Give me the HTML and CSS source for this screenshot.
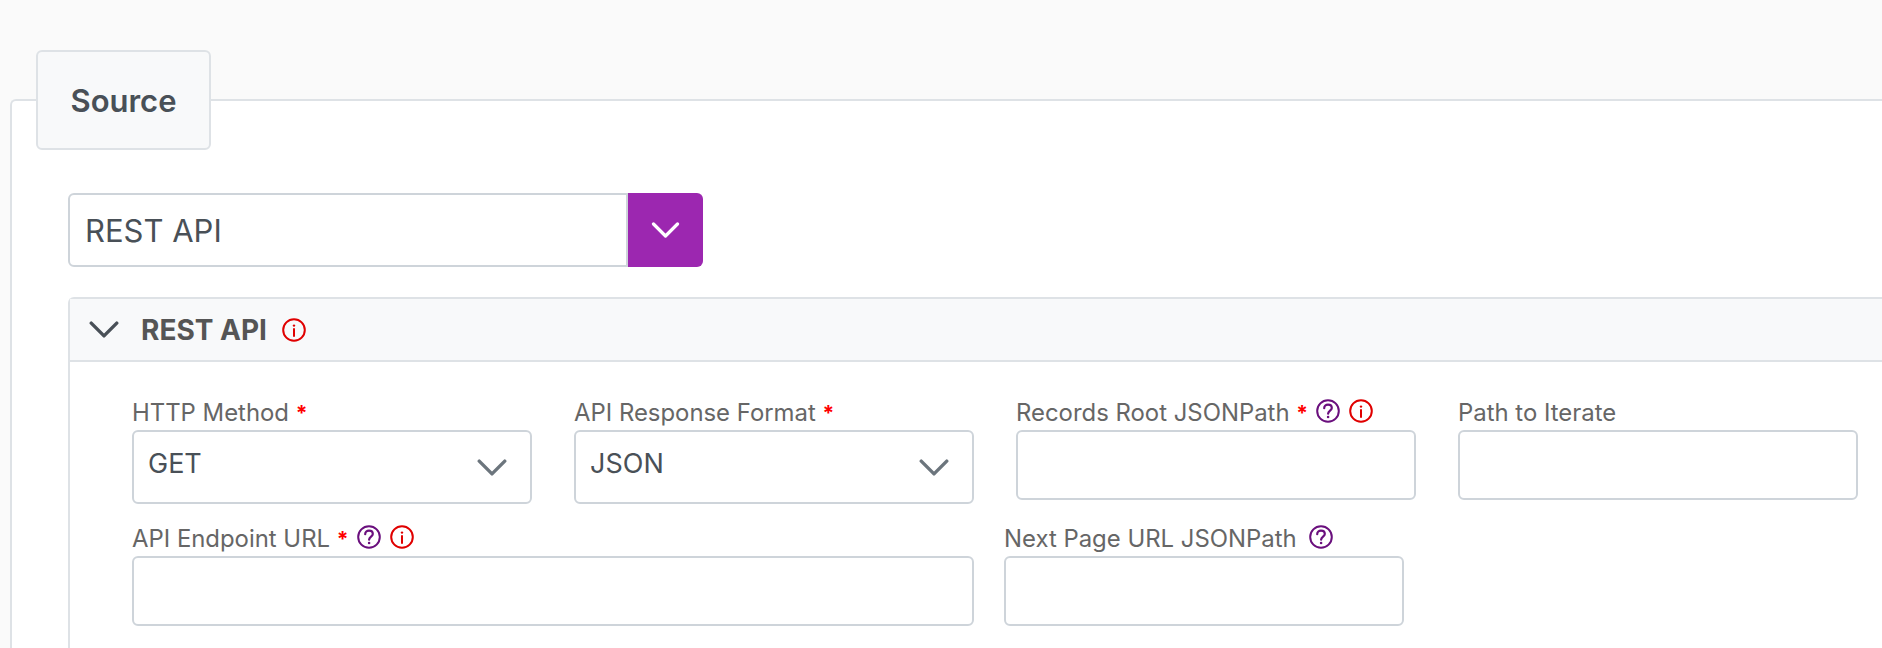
FILE: index.html
```html
<!DOCTYPE html>
<html lang="en">
<head>
  <meta charset="UTF-8" />
  <title>Source</title>
  <link rel="stylesheet" href="styles.css">
</head>
<body>
  <svg class="sprite" width="0" height="0">
    <symbol id="icon-info" viewBox="0 0 24 24">
      <circle cx="12" cy="12" r="10.8" fill="none" stroke="currentColor" stroke-width="2" />
      <circle cx="12" cy="7.6" r="1.2" fill="currentColor" />
      <path d="M12 11v7" fill="none" stroke="currentColor" stroke-width="2" stroke-linecap="round" />
    </symbol>
    <symbol id="icon-help" viewBox="0 0 24 24">
      <circle cx="12" cy="12" r="10.8" fill="none" stroke="currentColor" stroke-width="2" />
      <path d="M8.2 9.2c0-2.3 1.7-3.6 3.8-3.6s3.8 1.3 3.8 3.3c0 2.6-3.7 2.8-3.7 5.8" fill="none" stroke="currentColor" stroke-width="2.2" stroke-linecap="round" />
      <circle cx="12.1" cy="18" r="1.3" fill="currentColor" />
    </symbol>
    <symbol id="icon-chevron" viewBox="0 0 28 16">
      <path d="M2 2L14 14L26 2" fill="none" stroke="currentColor" stroke-width="3.2" stroke-linecap="round" stroke-linejoin="round" />
    </symbol>
  </svg>

  <section class="panel">
    <h2 class="panel-tab">Source</h2>

    <div class="source-picker">
      <select class="source-select">
        <option>REST API</option>
      </select>
      <button type="button" class="source-toggle">
        <svg class="icon-chevron-sm"><use href="#icon-chevron" /></svg>
      </button>
    </div>

    <div class="accordion">
      <div class="accordion-header">
        <svg class="accordion-chevron"><use href="#icon-chevron" /></svg>
        <span class="accordion-title">REST API</span>
        <svg class="icon icon-red"><use href="#icon-info" /></svg>
      </div>

      <form class="accordion-body">
        <div class="form-row row-four">
          <div class="field">
            <label>HTTP Method <span class="req">*</span></label>
            <div class="select-wrap">
              <select><option>GET</option></select>
              <svg class="select-chevron"><use href="#icon-chevron" /></svg>
            </div>
          </div>
          <div class="field">
            <label>API Response Format <span class="req">*</span></label>
            <div class="select-wrap">
              <select><option>JSON</option></select>
              <svg class="select-chevron"><use href="#icon-chevron" /></svg>
            </div>
          </div>
          <div class="field">
            <label>Records Root JSONPath <span class="req">*</span>
              <svg class="icon icon-purple"><use href="#icon-help" /></svg>
              <svg class="icon icon-red"><use href="#icon-info" /></svg>
            </label>
            <input type="text" />
          </div>
          <div class="field">
            <label>Path to Iterate</label>
            <input type="text" />
          </div>
        </div>

        <div class="form-row row-two">
          <div class="field field-wide">
            <label>API Endpoint URL <span class="req">*</span>
              <svg class="icon icon-purple"><use href="#icon-help" /></svg>
              <svg class="icon icon-red"><use href="#icon-info" /></svg>
            </label>
            <input type="text" />
          </div>
          <div class="field">
            <label>Next Page URL JSONPath
              <svg class="icon icon-purple icon-gap"><use href="#icon-help" /></svg>
            </label>
            <input type="text" />
          </div>
        </div>
      </form>
    </div>
  </section>
</body>
</html>
```

FILE: styles.css
```css
html, body {
  height: 648px;
  overflow: hidden;
}

body {
  margin: 0;
  padding-top: 99px;
  box-sizing: border-box;
  background: #fafafa;
  font-family: Inter, "Noto Sans", sans-serif;
  color: #495057;
}

.sprite {
  display: block;
  height: 0;
}

.panel {
  margin-left: 10px;
  height: 549px;
  padding-left: 26px;
  background: #fff;
  border: 2px solid #dee2e6;
  border-right: 0;
  border-bottom: 0;
  border-radius: 6px 0 0 0;
  box-sizing: border-box;
}

.panel-tab {
  width: 175px;
  height: 100px;
  margin: -51px 0 0 -2px;
  padding-top: 1px;
  box-sizing: border-box;
  display: flex;
  align-items: center;
  justify-content: center;
  background: #f8f9fa;
  border: 2px solid #dee2e6;
  border-radius: 6px;
  font-size: 31px;
  font-weight: 600;
}

.source-picker {
  display: flex;
  width: 635px;
  height: 74px;
  margin: 43px 0 0 30px;
}

.source-select {
  flex: 1;
  padding: 0 0 0 15px;
  font-size: 31px;
}

select, input {
  appearance: none;
  display: block;
  width: 100%;
  box-sizing: border-box;
  background: #fff;
  border: 2px solid #ced4da;
  border-radius: 6px;
  font-family: inherit;
  color: #495057;
  outline: none;
}

.source-select {
  border-radius: 6px 0 0 6px;
  width: auto;
}

.source-toggle {
  width: 75px;
  padding: 0;
  display: flex;
  align-items: center;
  justify-content: center;
  background: #9c27b0;
  border: 0;
  border-radius: 0 6px 6px 0;
  color: #fff;
}

.icon-chevron-sm {
  width: 29px;
  height: 16px;
}

.accordion {
  height: 351px;
  box-sizing: border-box;
  margin: 30px 0 0 30px;
  border: 2px solid #dee2e6;
  border-right: 0;
  border-bottom: 0;
  border-radius: 6px 0 0 0;
}

.accordion-header {
  display: flex;
  align-items: center;
  height: 61px;
  padding-left: 19px;
  background: #f8f9fa;
  border-bottom: 2px solid #dee2e6;
}

.accordion-chevron {
  width: 30px;
  height: 17px;
  color: #495057;
}

.accordion-title {
  margin: 0 15px 0 22px;
  font-size: 28px;
  font-weight: 700;
  color: #555;
}

.icon {
  width: 24px;
  height: 24px;
  flex: none;
  vertical-align: -2px;
}

.field .icon {
  margin-left: 1px;
}

.field .icon + .icon {
  margin-left: 3px;
}

.field-wide .icon {
  margin-left: 2px;
}

.field-wide .icon + .icon {
  margin-left: 2px;
}

.icon-red {
  color: #e00000;
}

.icon-purple {
  color: #6a0f7d;
}

.field .icon-gap {
  margin-left: 6px;
}

.accordion-body {
  padding: 37px 0 0 62px;
}

.form-row {
  display: flex;
  align-items: flex-start;
}

.row-four {
  gap: 42px;
}

.row-two {
  gap: 30px;
  margin-top: 21px;
}

.field {
  width: 400px;
}

.field-wide {
  width: 842px;
}

.field label {
  display: block;
  height: 31px;
  font-size: 23.9px;
  line-height: 28px;
  color: #666;
  white-space: nowrap;
}

.req {
  color: #f00;
  font-size: 21px;
  font-weight: 700;
}

.select-wrap {
  position: relative;
}

.select-wrap select {
  height: 74px;
  padding: 0 0 7px 14px;
  font-size: 27px;
}

.select-chevron {
  position: absolute;
  top: 29px;
  right: 25px;
  width: 30px;
  height: 17px;
  color: #6c757d;
}

.field input {
  height: 70px;
}
```
